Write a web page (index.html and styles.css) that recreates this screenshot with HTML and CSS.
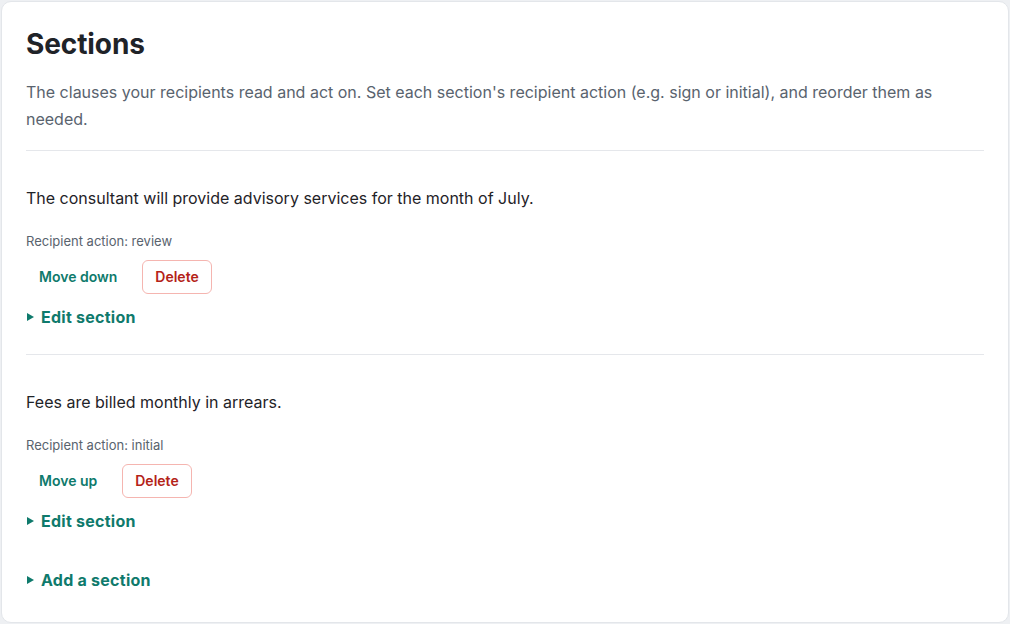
FILE: index.html
```html
<!DOCTYPE html>
<html lang="en">
<head>
<meta charset="utf-8">
<title>Sections</title>
<link rel="stylesheet" href="styles.css">
</head>
<body>
<main class="card">
  <header class="card-head">
    <h1 class="title">Sections</h1>
    <p class="lead">The clauses your recipients read and act on. Set each section's recipient action (e.g. sign or initial), and reorder them as needed.</p>
  </header>

  <section class="section">
    <p class="clause">The consultant will provide advisory services for the month of July.</p>
    <p class="meta">Recipient action: review</p>
    <div class="actions">
      <button class="btn btn-ghost" type="button">Move down</button>
      <button class="btn btn-danger" type="button">Delete</button>
    </div>
    <details class="disclosure">
      <summary>Edit section</summary>
    </details>
  </section>

  <section class="section">
    <p class="clause">Fees are billed monthly in arrears.</p>
    <p class="meta">Recipient action: initial</p>
    <div class="actions">
      <button class="btn btn-ghost" type="button">Move up</button>
      <button class="btn btn-danger" type="button">Delete</button>
    </div>
    <details class="disclosure">
      <summary>Edit section</summary>
    </details>
  </section>

  <details class="disclosure add">
    <summary>Add a section</summary>
  </details>
</main>
</body>
</html>
```

FILE: styles.css
```css
* { box-sizing: border-box; }

html, body {
  height: 100%;
}

body {
  margin: 0;
  padding: 1px;
  background: #eef0f3;
  font-family: Inter, "Noto Sans", "Liberation Sans", sans-serif;
  color: #1f2328;
}

.card {
  background: #ffffff;
  border: 1px solid #e3e6ea;
  border-radius: 10px;
  padding: 24px;
  min-height: 100%;
}

.card-head {
  padding-bottom: 17px;
}

.title {
  margin: 0;
  font-size: 28px;
  line-height: 36px;
  font-weight: 700;
  letter-spacing: -0.1px;
  color: #1f2328;
}

.lead {
  margin: 17px 0 0;
  font-size: 16px;
  line-height: 27px;
  color: #59636e;
}

.section {
  padding: 35px 0 25px;
  border-top: 1px solid #e5e7eb;
}

.clause {
  margin: 0;
  font-size: 16px;
  line-height: 24px;
  color: #1f2328;
}

.meta {
  margin: 21px 0 0;
  font-size: 13px;
  line-height: 20px;
  color: #59636e;
}

.actions {
  display: flex;
  gap: 12px;
  margin-top: 9px;
}

.btn {
  font-family: inherit;
  font-size: 14px;
  line-height: 20px;
  font-weight: 600;
  padding: 6px 12px;
  border-radius: 6px;
  border: 1px solid transparent;
  background: transparent;
  cursor: pointer;
}

.btn-ghost {
  color: #0f7a6c;
}

.btn-danger {
  color: #b42318;
  border-color: #f5b5b0;
  background: #ffffff;
}

.disclosure {
  margin-top: 11px;
}

.disclosure summary {
  display: flex;
  align-items: center;
  list-style: none;
  font-size: 16px;
  line-height: 24px;
  font-weight: 700;
  letter-spacing: 0.25px;
  color: #0f7a6c;
  cursor: pointer;
}

.disclosure summary::-webkit-details-marker {
  display: none;
}

.disclosure summary::before {
  content: "";
  width: 0;
  height: 0;
  margin: 0 7px 0 1px;
  border-left: 7px solid currentColor;
  border-top: 4.5px solid transparent;
  border-bottom: 4.5px solid transparent;
}

.add {
  margin-top: 10px;
}
```
